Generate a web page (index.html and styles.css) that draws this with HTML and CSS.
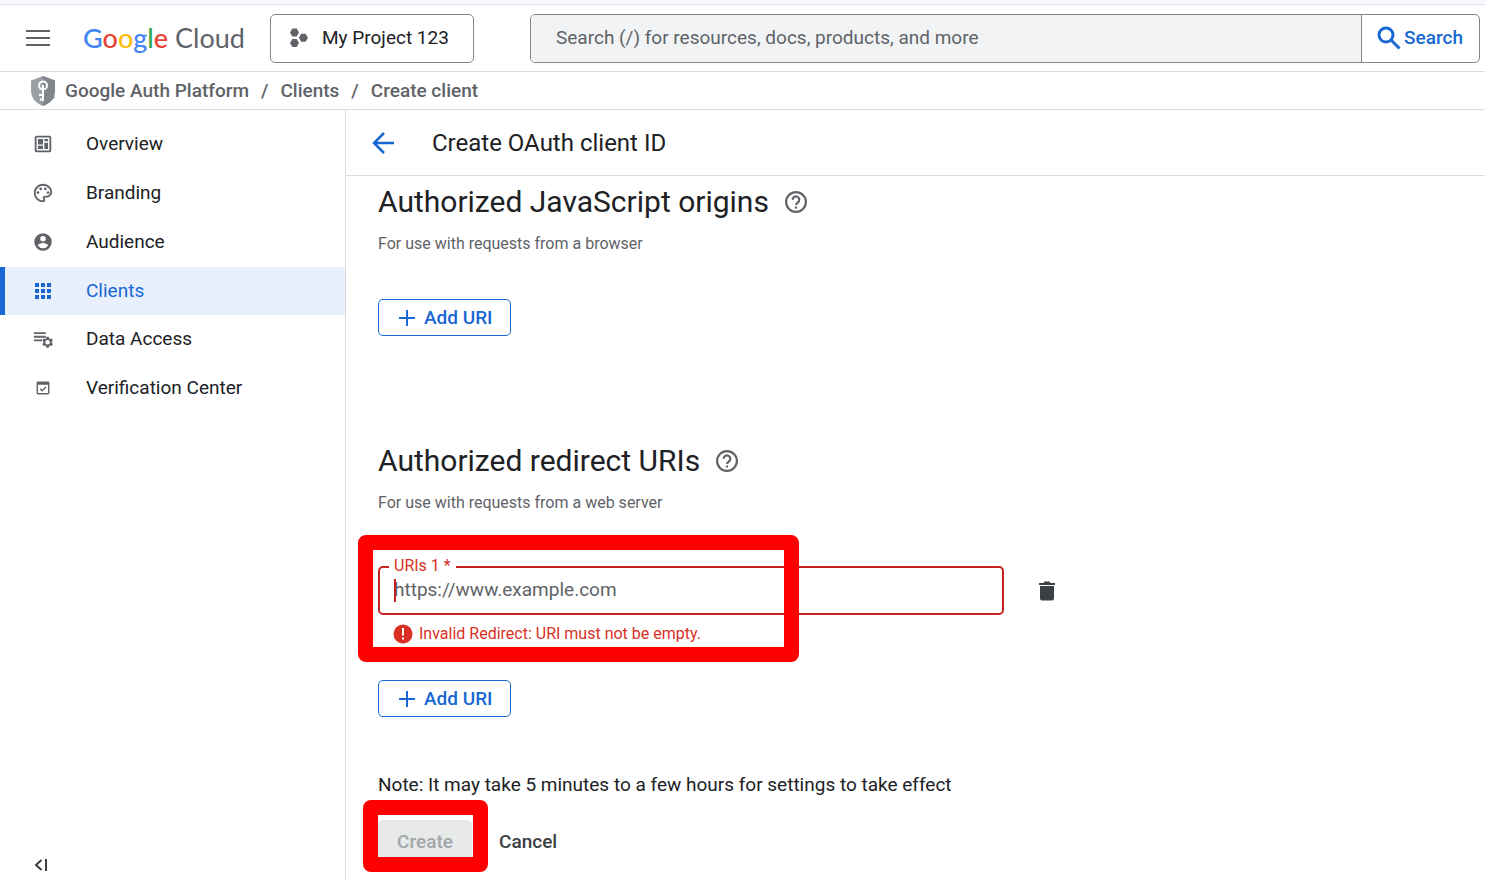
FILE: index.html
```html
<!DOCTYPE html>
<html lang="en">
<head>
<meta charset="utf-8">
<title>Create OAuth client ID – Google Cloud</title>
<link rel="stylesheet" href="styles.css">
</head>
<body>
<div class="strip"></div>
<header class="topbar">
  <button class="icon-btn menu" aria-label="Main menu">
    <svg width="24" height="16" viewBox="0 0 24 16" fill="#5f6368"><path d="M0 0h24v2H0zM0 7h24v2H0zM0 14h24v2H0z"/></svg>
  </button>
  <a class="logo" href="#"><span class="google"><span class="b">G</span><span class="r">o</span><span class="y">o</span><span class="b">g</span><span class="g">l</span><span class="r">e</span></span> Cloud</a>
  <button class="project">
    <svg width="18" height="20" viewBox="0 0 18 20" fill="#5f6368"><path d="M2.3.5h4.4L9 4.500 6.700 8.500H2.300L0 4.500zM2.300 11h4.400L9 15l-2.300 4H2.300L0 15zM11.200 5.700h4.400l2.300 4-2.300 4h-4.400l-2.300-4z"/></svg>
    My Project 123
  </button>
  <form class="search">
    <input type="text" aria-label="Search" placeholder="Search (/) for resources, docs, products, and more">
    <button type="button">
      <svg width="24" height="24" viewBox="0 0 24 24" fill="none" stroke="#1967d2" stroke-width="3"><circle cx="9" cy="9" r="7"/><path d="M14 14l8.500 8.500"/></svg>
      Search
    </button>
  </form>
</header>
<nav class="crumbs" aria-label="Breadcrumb">
  <svg width="24" height="30" viewBox="0 0 24 30"><path fill="#9aa0a6" d="M12 0l12 4.500v10C24 22 19 27.500 12 30 5 27.500 0 22 0 14.500v-10z"/><path fill="#80868b" d="M12 0l12 4.500v10C24 22 19 27.500 12 30zM14 12l10 9-6 6-6-1z"/><g fill="none" stroke="#fff" stroke-width="2"><circle cx="12" cy="9.500" r="4"/><path d="M12 9v16M12 19H8M12 23.500H9"/></g></svg>
  <a href="#">Google Auth Platform</a><span>/</span><a href="#">Clients</a><span>/</span><a href="#">Create client</a>
</nav>
<div class="body">
  <aside class="side">
    <nav aria-label="Google Auth Platform">
      <div class="group">
        <a href="#"><svg viewBox="0 0 24 24"><path fill-rule="evenodd" d="M19 3H5a2 2 0 0 0-2 2v14a2 2 0 0 0 2 2h14a2 2 0 0 0 2-2V5a2 2 0 0 0-2-2zm0 16H5V5h14zM6.500 6.500h5.500v6H6.500zM13.500 6.500h4v2.500h-4zM6.500 14h5.500v3.500H6.500zM13.500 10.500h4v7h-4z"/></svg>Overview</a>
        <a href="#"><svg viewBox="0 0 24 24"><path d="M12 22C6.490 22 2 17.510 2 12S6.490 2 12 2s10 4.040 10 9c0 3.310-2.690 6-6 6h-1.770c-.28 0-.5.22-.5.5 0 .12.050.23.130.33.410.47.640 1.060.640 1.670A2.500 2.500 0 0 1 12 22zm0-18c-4.410 0-8 3.590-8 8s3.590 8 8 8c.28 0 .5-.22.5-.5a.54.54 0 0 0-.14-.35c-.41-.46-.63-1.050-.63-1.650a2.500 2.500 0 0 1 2.500-2.500H16c2.210 0 4-1.790 4-4 0-3.860-3.590-7-8-7z"/><circle cx="6.500" cy="11.500" r="1.500"/><circle cx="9.500" cy="7.500" r="1.500"/><circle cx="14.500" cy="7.500" r="1.500"/><circle cx="17.500" cy="11.500" r="1.500"/></svg>Branding</a>
        <a href="#"><svg viewBox="0 0 24 24"><path d="M12 2.500a9.500 9.500 0 1 0 0 19 9.500 9.500 0 0 0 0-19zm0 3a3 3 0 1 1 0 6.100 3 3 0 0 1 0-6.100zm0 13.400a6.700 6.700 0 0 1-5.600-3c0-1.900 3.700-2.900 5.600-2.900s5.600 1 5.600 2.900a6.700 6.700 0 0 1-5.600 3z"/></svg>Audience</a>
        <a href="#" class="active" aria-current="page"><svg viewBox="0 0 24 24" shape-rendering="crispEdges"><path d="M4 4h4v4H4zM10 4h4v4h-4zM16 4h4v4h-4zM4 10h4v4H4zM10 10h4v4h-4zM16 10h4v4h-4zM4 16h4v4H4zM10 16h4v4h-4zM16 16h4v4h-4z"/></svg>Clients</a>
      </div>
      <div class="group">
        <a href="#"><svg viewBox="0 0 24 24"><path d="M2 4.500h13v2H2zM2 8.500h13v2H2zM2 12.500h9v2H2z"/><path fill-rule="evenodd" d="M15.700 9.500h2.600l.4 1.700 1.200.7 1.600-.5 1.300 2.200-1.200 1.200v1.400l1.200 1.200-1.300 2.200-1.600-.5-1.200.7-.4 1.700h-2.600l-.4-1.700-1.200-.7-1.600.5-1.300-2.200 1.200-1.200v-1.400l-1.200-1.200 1.300-2.200 1.600.5 1.200-.7zM17 13a2.500 2.500 0 1 0 0 5 2.500 2.500 0 0 0 0-5z"/></svg>Data Access</a>
        <a href="#"><svg viewBox="0 0 24 24"><path fill-rule="evenodd" d="M6.500 5h11A1.500 1.500 0 0 1 19 6.500v11a1.500 1.500 0 0 1-1.500 1.500h-11A1.500 1.500 0 0 1 5 17.500v-11A1.500 1.500 0 0 1 6.500 5zm0 3.500v9h11v-9z"/><path fill="none" stroke="#5f6368" stroke-width="1.500" d="M9 12.800l2.200 2.200 4-4"/></svg>Verification Center</a>
      </div>
    </nav>
    <button class="icon-btn collapse" aria-label="Collapse navigation">
      <svg width="14" height="12" viewBox="0 0 14 12" fill="none" stroke="#3c4043" stroke-width="2"><path d="M7.500 1L2 6l5.500 5M12 0v12"/></svg>
    </button>
  </aside>
  <main>
    <div class="titlebar">
      <a href="#" class="back" aria-label="Back"><svg width="22" height="22" viewBox="0 0 22 22" fill="none" stroke="#1967d2" stroke-width="2.500"><path d="M22 11H2M12 1L2 11l10 10"/></svg></a>
      <h1>Create OAuth client ID</h1>
    </div>
    <form class="content">
      <section class="origins">
        <h2>Authorized JavaScript origins <svg class="help" viewBox="0 0 20 20"><circle cx="10" cy="10" r="9"/><path d="M7 8a3 3 0 1 1 4.600 2.500C10.500 11.300 10 11.700 10 12.800M10 14v2"/></svg></h2>
        <p class="hint">For use with requests from a browser</p>
        <button type="button" class="add"><svg width="16" height="16" viewBox="0 0 16 16"><path d="M7 0h2v7h7v2H9v7H7V9H0V7h7z"/></svg>Add URI</button>
      </section>
      <section class="redirects">
        <h2>Authorized redirect URIs <svg class="help" viewBox="0 0 20 20"><circle cx="10" cy="10" r="9"/><path d="M7 8a3 3 0 1 1 4.600 2.500C10.500 11.300 10 11.700 10 12.800M10 14v2"/></svg></h2>
        <p class="hint">For use with requests from a web server</p>
        <div class="uri">
          <div class="row">
            <div class="field">
              <label for="uri1">URIs 1 *</label>
              <input id="uri1" type="text" placeholder="https://www.example.com" aria-describedby="uri1-error">
              <span class="caret"></span>
            </div>
            <button type="button" class="icon-btn" aria-label="Delete URI"><svg width="18" height="20" viewBox="0 0 18 20" fill="#3c4043"><path d="M1 2h4.500l1-1.500h5l1 1.500H17v2H1zM2 5h14v12.500a2 2 0 0 1-2 2H4a2 2 0 0 1-2-2z"/></svg></button>
          </div>
          <p class="error" id="uri1-error"><svg width="20" height="20" viewBox="0 0 20 20"><circle cx="10" cy="10" r="9.500" fill="#d93025"/><path fill="#fff" d="M9 4h2v7.500H9zM9 13.500h2v2H9z"/></svg>Invalid Redirect: URI must not be empty.</p>
          <span class="mark mark-uri"></span>
        </div>
        <button type="button" class="add"><svg width="16" height="16" viewBox="0 0 16 16"><path d="M7 0h2v7h7v2H9v7H7V9H0V7h7z"/></svg>Add URI</button>
      </section>
      <p class="note">Note: It may take 5 minutes to a few hours for settings to take effect</p>
      <div class="actions">
        <div class="create-wrap">
          <button type="button" class="create" disabled>Create</button>
          <span class="mark mark-create"></span>
        </div>
        <button type="button" class="cancel">Cancel</button>
      </div>
    </form>
  </main>
</div>
</body>
</html>
```
FILE: styles.css
```css
* { box-sizing: border-box; }

body {
  margin: 0;
  height: 100vh;
  display: flex;
  flex-direction: column;
  overflow: hidden;
  background: #fff;
  color: #202124;
  font: 19px/24px Roboto, sans-serif;
}

a { color: inherit; text-decoration: none; }
button, input { font: inherit; margin: 0; }
button { background: none; border: 0; padding: 0; color: inherit; }
h1, h2, p { margin: 0; font-weight: 400; }
svg { flex: none; display: block; }
.icon-btn { display: flex; }

.strip {
  flex: none;
  height: 5px;
  background: #f8f9fe;
  border-bottom: 1px solid #dfe1eb;
}

.topbar {
  flex: none;
  display: flex;
  align-items: center;
  height: 67px;
  padding: 0 5px 0 26px;
  border-bottom: 1px solid #dadce0;
}

.logo {
  width: 187px;
  margin-left: 33px;
  font: 27px/32px Lato, sans-serif;
  color: #5f6368;
  white-space: nowrap;
}
.google { font-weight: 500; }
.b { color: #4285f4; }
.r { color: #ea4335; }
.y { color: #fbbc04; }
.g { color: #34a853; }

.project {
  display: flex;
  align-items: center;
  gap: 14px;
  width: 204px;
  height: 49px;
  padding: 0 19px;
  border: 1px solid #80868b;
  border-radius: 5px;
  white-space: nowrap;
}

.search {
  flex: 1;
  display: flex;
  height: 49px;
  margin-left: 56px;
  border: 1px solid #80868b;
  border-radius: 5px;
  overflow: hidden;
}
.search input {
  flex: 1;
  min-width: 0;
  padding: 0 25px;
  border: 0;
  background: #f1f3f4;
}
.search input::placeholder { color: #5f6368; opacity: 1; }
.search button {
  display: flex;
  align-items: center;
  gap: 3px;
  padding: 0 16px 0 15px;
  border-left: 1px solid #80868b;
  color: #1967d2;
  font-weight: 500;
}

.crumbs {
  flex: none;
  display: flex;
  align-items: center;
  gap: 12px;
  height: 38px;
  padding-left: 31px;
  border-bottom: 1px solid #dadce0;
  color: #5f6368;
  font-weight: 500;
}
.crumbs svg { margin-right: -2px; }

.body { flex: 1; display: flex; min-height: 0; }

.side {
  flex: none;
  display: flex;
  flex-direction: column;
  justify-content: space-between;
  width: 346px;
  padding-top: 10px;
  border-right: 1px solid #dadce0;
}
.group { display: grid; gap: 1px; }
.group a {
  display: flex;
  align-items: center;
  gap: 32px;
  height: 48px;
  padding-left: 27px;
  border-left: 5px solid transparent;
}
.group svg { width: 22px; height: 22px; fill: #5f6368; }
.group .active { border-color: #1967d2; background: #e8f0fe; color: #1967d2; }
.group .active svg { width: 24px; height: 24px; margin: 0 -1px; fill: #1967d2; }
.collapse { margin: 0 0 10px 34px; }

main { flex: 1; min-width: 0; }
.titlebar {
  display: flex;
  align-items: center;
  gap: 38px;
  height: 66px;
  padding-left: 26px;
  border-bottom: 1px solid #dadce0;
}
h1 { font-size: 24px; line-height: 32px; }

.content { padding: 6px 32px 0; }
h2 {
  display: flex;
  align-items: center;
  gap: 16px;
  font-size: 30px;
  line-height: 40px;
}
.help { width: 22px; height: 22px; fill: none; stroke: #5f6368; stroke-width: 2; }
.hint { margin-top: 12px; color: #5f6368; font-size: 16px; line-height: 20px; }

.add {
  display: flex;
  align-items: center;
  gap: 9px;
  height: 37px;
  padding: 0 17px 0 20px;
  border: 1px solid #1967d2;
  border-radius: 5px;
  color: #1967d2;
  font-weight: 500;
}
.add svg { fill: #1967d2; }
.origins .add { margin-top: 45px; }
.redirects { margin-top: 105px; }
.redirects .add { margin-top: 36px; }

.uri { position: relative; margin-top: 53px; }
.row { display: flex; align-items: center; gap: 34px; }
.field {
  position: relative;
  flex: 0 1 626px;
  height: 49px;
  border: 2px solid #c5221f;
  border-radius: 5px;
}
.field label {
  position: absolute;
  top: -12px;
  left: 9px;
  padding: 0 5px;
  background: #fff;
  color: #d93025;
  font-size: 16px;
  line-height: 20px;
}
.field input {
  width: 100%;
  height: 43px;
  padding: 0 14px;
  border: 0;
  background: none;
  outline: 0;
}
.field input::placeholder { color: #5f6368; opacity: 1; }
.caret {
  position: absolute;
  top: 11px;
  left: 14px;
  width: 2px;
  height: 23px;
  background: #c5221f;
}
.error {
  display: flex;
  align-items: center;
  gap: 6px;
  margin: 9px 0 0 15px;
  color: #d93025;
  font-size: 16px;
  line-height: 20px;
}

/* Highlight frames drawn over the form */
.mark {
  position: absolute;
  border: 15px solid #f00;
  border-radius: 8px;
  pointer-events: none;
}
.mark-uri { top: -31px; left: -20px; width: 441px; height: 127px; }
.mark-create { top: -20px; left: -15px; width: 125px; height: 72px; }

.note { margin-top: 56px; }
.actions { display: flex; gap: 27px; margin-top: 23px; font-weight: 500; }
.create-wrap { position: relative; }
.create {
  width: 94px;
  height: 43px;
  border-radius: 5px;
  background: #e8eaea;
  color: #a3a6a9;
}
.cancel { color: #3c4043; }
```
